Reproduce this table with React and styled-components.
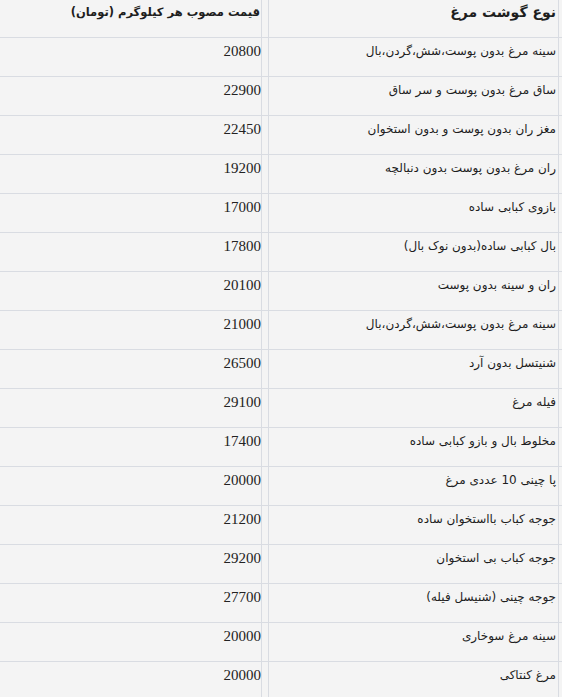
import React from 'react';
import styled, { createGlobalStyle } from 'styled-components';

const GlobalStyle = createGlobalStyle`
  html, body {
    margin: 0;
    padding: 0;
    background: #f4f4f4;
  }
  body {
    font-family: "DejaVu Sans", sans-serif;
    color: #1e1e1e;
  }
`;

const rows = [
  ['سینه مرغ بدون پوست،شش،گردن،بال', '20800'],
  ['ساق مرغ بدون پوست و سر ساق', '22900'],
  ['مغز ران بدون پوست و بدون استخوان', '22450'],
  ['ران مرغ بدون پوست بدون دنبالچه', '19200'],
  ['بازوی کبابی ساده', '17000'],
  ['بال کبابی ساده(بدون نوک بال)', '17800'],
  ['ران و سینه بدون پوست', '20100'],
  ['سینه مرغ بدون پوست،شش،گردن،بال', '21000'],
  ['شنیتسل بدون آرد', '26500'],
  ['فیله مرغ', '29100'],
  ['مخلوط بال و بازو کبابی ساده', '17400'],
  ['پا چینی 10 عددی مرغ', '20000'],
  ['جوجه کباب بااستخوان ساده', '21200'],
  ['جوجه کباب بی استخوان', '29200'],
  ['جوجه چینی (شنیسل فیله)', '27700'],
  ['سینه مرغ سوخاری', '20000'],
  ['مرغ کنتاکی', '20000'],
];

const Table = styled.div`
  direction: rtl;
  width: 562px;
  background: #f4f4f4;
`;

const Row = styled.div`
  display: flex;
  height: ${({ $head }) => ($head ? '37px' : '38px')};
  border-bottom: 1px solid #d9dce2;
  margin-top: ${({ $head }) => ($head ? '-2px' : '0')};
  padding-top: ${({ $head }) => ($head ? '2px' : '0')};
`;

const NameCell = styled.div`
  width: 287px;
  flex: none;
  margin-right: 3px;
  border-right: 1px solid #d9dce2;
  border-left: 1px solid #d9dce2;
  padding: ${({ $head }) => ($head ? '3px 2px 0 0' : '4px 2px 0 0')};
  font-size: ${({ $head }) => ($head ? '14px' : '12px')};
  font-weight: ${({ $head }) => ($head ? 700 : 400)};
  line-height: 18px;
  white-space: nowrap;
`;

const PriceCell = styled.div`
  width: 263px;
  flex: none;
  margin-right: 6px;
  border-right: 1px solid #d9dce2;
  padding: ${({ $head }) => ($head ? '3px 1px 0 0' : '4px 0 0 0')};
  font-size: ${({ $head }) => ($head ? '11.5px' : '12px')};
  font-weight: ${({ $head }) => ($head ? 700 : 400)};
  line-height: 18px;
  white-space: nowrap;
`;

const Num = styled.span`
  font-family: "Liberation Serif", serif;
  font-size: 15px;
  color: #222;
`;

export default function App() {
  return (
    <>
      <GlobalStyle />
      <Table>
        <Row $head>
          <NameCell $head>نوع گوشت مرغ</NameCell>
          <PriceCell $head>قیمت مصوب هر کیلوگرم (تومان)</PriceCell>
        </Row>
        {rows.map(([name, price], i) => (
          <Row key={i}>
            <NameCell>{name}</NameCell>
            <PriceCell>
              <Num>{price}</Num>
            </PriceCell>
          </Row>
        ))}
      </Table>
    </>
  );
}
